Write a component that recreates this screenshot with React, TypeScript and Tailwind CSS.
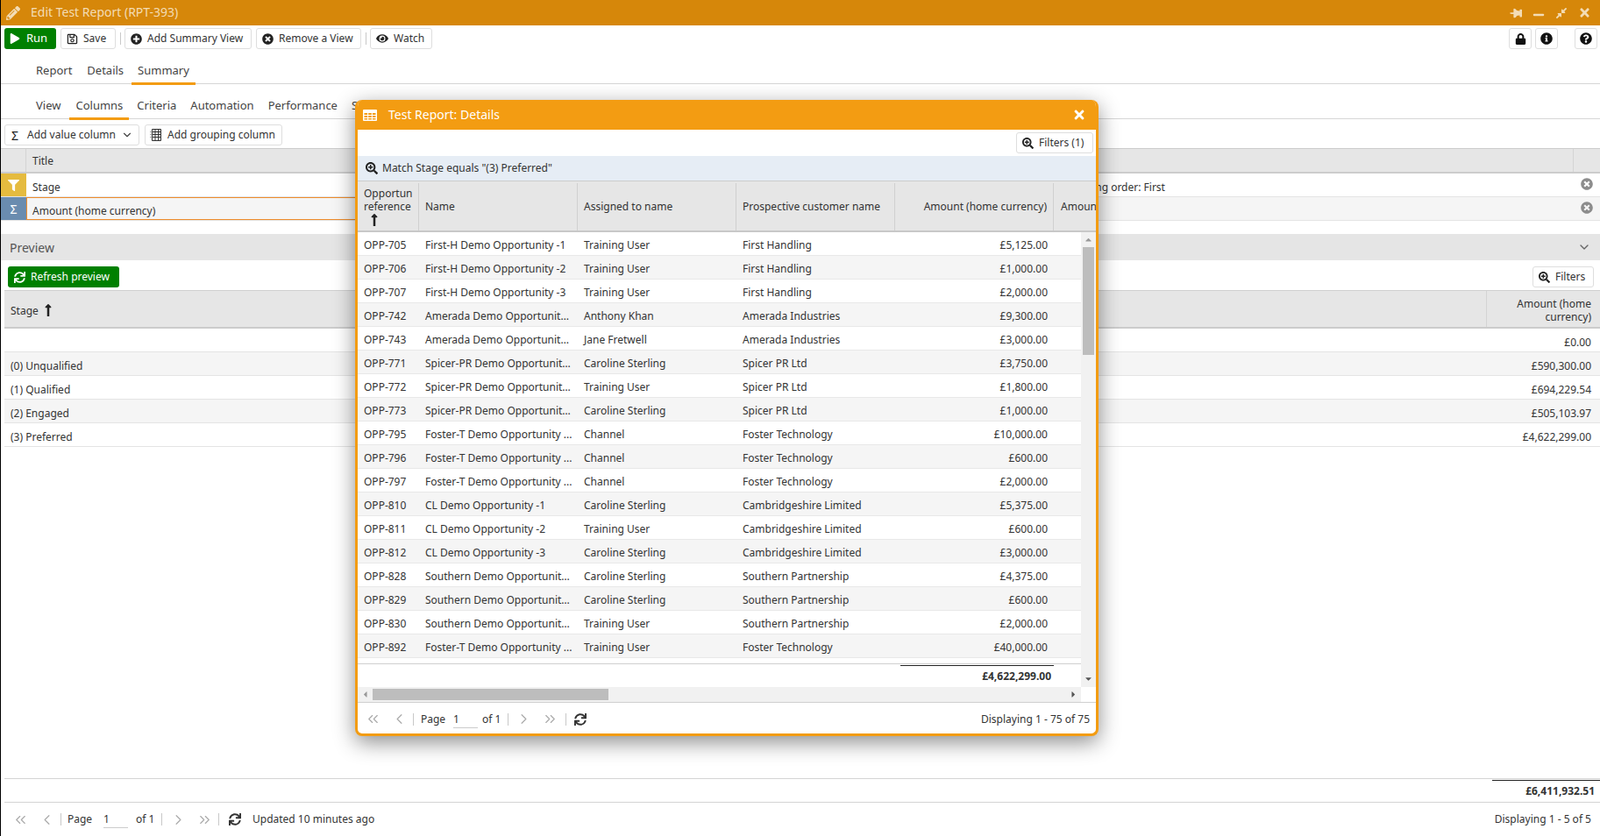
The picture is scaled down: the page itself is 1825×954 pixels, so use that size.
import React from "react";
import {
  FaPlay, FaRegSave, FaPlusCircle, FaTimesCircle, FaEye, FaLock, FaInfoCircle, FaQuestionCircle,
  FaThumbtack, FaMinus, FaCompressAlt, FaTimes, FaFilter, FaSearchPlus, FaSync, FaPencilAlt,
  FaLongArrowAltUp, FaCaretUp, FaCaretDown, FaCaretLeft, FaCaretRight,
} from "react-icons/fa";
import { ChevronDown, ChevronLeft, ChevronRight, ChevronsLeft, ChevronsRight } from "lucide-react";

const rows: [string, string, string, string, string][] = [
  ["OPP-705", "First-H Demo Opportunity -1", "Training User", "First Handling", "£5,125.00"],
  ["OPP-706", "First-H Demo Opportunity -2", "Training User", "First Handling", "£1,000.00"],
  ["OPP-707", "First-H Demo Opportunity -3", "Training User", "First Handling", "£2,000.00"],
  ["OPP-742", "Amerada Demo Opportunity -1", "Anthony Khan", "Amerada Industries", "£9,300.00"],
  ["OPP-743", "Amerada Demo Opportunity -2", "Jane Fretwell", "Amerada Industries", "£3,000.00"],
  ["OPP-771", "Spicer-PR Demo Opportunity -1", "Caroline Sterling", "Spicer PR Ltd", "£3,750.00"],
  ["OPP-772", "Spicer-PR Demo Opportunity -2", "Training User", "Spicer PR Ltd", "£1,800.00"],
  ["OPP-773", "Spicer-PR Demo Opportunity -3", "Caroline Sterling", "Spicer PR Ltd", "£1,000.00"],
  ["OPP-795", "Foster-T Demo Opportunity ...", "Channel", "Foster Technology", "£10,000.00"],
  ["OPP-796", "Foster-T Demo Opportunity ...", "Channel", "Foster Technology", "£600.00"],
  ["OPP-797", "Foster-T Demo Opportunity ...", "Channel", "Foster Technology", "£2,000.00"],
  ["OPP-810", "CL Demo Opportunity -1", "Caroline Sterling", "Cambridgeshire Limited", "£5,375.00"],
  ["OPP-811", "CL Demo Opportunity -2", "Training User", "Cambridgeshire Limited", "£600.00"],
  ["OPP-812", "CL Demo Opportunity -3", "Caroline Sterling", "Cambridgeshire Limited", "£3,000.00"],
  ["OPP-828", "Southern Demo Opportunity -1", "Caroline Sterling", "Southern Partnership", "£4,375.00"],
  ["OPP-829", "Southern Demo Opportunity -2", "Caroline Sterling", "Southern Partnership", "£600.00"],
  ["OPP-830", "Southern Demo Opportunity -3", "Training User", "Southern Partnership", "£2,000.00"],
  ["OPP-892", "Foster-T Demo Opportunity ...", "Training User", "Foster Technology", "£40,000.00"],
];

const preview: [string, string][] = [
  ["", "£0.00"],
  ["(0) Unqualified", "£590,300.00"],
  ["(1) Qualified", "£694,229.54"],
  ["(2) Engaged", "£505,103.97"],
  ["(3) Preferred", "£4,622,299.00"],
];

function Btn({ icon, children, className = "" }: { icon: React.ReactNode; children?: React.ReactNode; className?: string }) {
  return (
    <div className={`flex h-[24px] items-center rounded-[3px] border border-[#dedede] bg-white text-[12px] text-[#333] ${className}`}>
      {icon}
      {children}
    </div>
  );
}

function Sep() {
  return <div className="h-[14px] w-px bg-[#c8c8c8]" />;
}

function TableIcon() {
  return (
    <svg width="16" height="13" viewBox="0 0 16 13" className="shrink-0" fill="currentColor">
      <path
        fillRule="evenodd"
        d="M1 0h14a1 1 0 0 1 1 1v11a1 1 0 0 1-1 1H1a1 1 0 0 1-1-1V1a1 1 0 0 1 1-1zM1.5 4v2h3.6V4zM6.2 4v2h3.6V4zM10.9 4v2h3.6V4zM1.5 7v2h3.6V7zM6.2 7v2h3.6V7zM10.9 7v2h3.6V7zM1.5 10v1.6h3.6V10zM6.2 10v1.6h3.6V10zM10.9 10v1.6h3.6V10z"
      />
    </svg>
  );
}

function GroupIcon() {
  return (
    <svg width="13" height="14" viewBox="0 0 13 14" className="ml-[5px] shrink-0" fill="none" stroke="#333" strokeWidth="1">
      <path d="M2.5 .5h10v13h-10zM2.5 3.5h10M2.5 6.5h10M2.5 9.5h10M6 .5v13M9.5 .5v13" />
      <path d="M0 3.5h2.5M0 6.5h2.5M0 9.5h2.5" stroke="#aaa" />
    </svg>
  );
}

function Pager({ note, compact }: { note?: string; compact?: boolean }) {
  return (
    <div className="flex items-center whitespace-nowrap text-[12px] text-[#333]">
      <div className="flex w-[30px] justify-center"><ChevronsLeft size={19} strokeWidth={1.5} className="text-[#aaa]" /></div>
      <div className="flex w-[30px] justify-center"><ChevronLeft size={19} strokeWidth={1.5} className="text-[#aaa]" /></div>
      <div className="ml-px"><Sep /></div>
      <span className={`w-[27px] ${compact ? "ml-[8px]" : "ml-[7px]"}`}>Page</span>
      <div className={`h-[20px] w-[28px] border-b border-[#ccc] leading-[20px] ${compact ? "ml-[10px]" : "ml-[14px]"}`}>1</div>
      <span className={`w-[20px] ${compact ? "ml-[5px]" : "ml-[9px]"}`}>of 1</span>
      <div className="ml-[9px]"><Sep /></div>
      <div className={`flex w-[30px] justify-center ${compact ? "ml-[2px]" : "ml-[3px]"}`}><ChevronRight size={19} strokeWidth={1.5} className="text-[#aaa]" /></div>
      <div className="flex w-[30px] justify-center"><ChevronsRight size={19} strokeWidth={1.5} className="text-[#aaa]" /></div>
      <div className={compact ? "ml-[3px]" : "ml-px"}><Sep /></div>
      <div className={`flex w-[18px] justify-center ${compact ? "ml-[7px]" : "ml-[9px]"}`}><FaSync size={14} className="text-[#333]" /></div>
      {note && <span className="ml-[11px]">{note}</span>}
    </div>
  );
}

function Tab({ children, active }: { children: React.ReactNode; active?: boolean }) {
  return (
    <div className={`flex h-[41px] shrink-0 items-center whitespace-nowrap border-b-[3px] px-[7px] pt-[12px] text-[13px] text-[#444] first:mr-px ${active ? "border-[#f39c12]" : "border-transparent"}`}>
      {children}
    </div>
  );
}

function Modal() {
  return (
    <div className="absolute left-[404px] top-[114px] flex h-[726px] w-[848px] flex-col overflow-hidden rounded-[8px] border-x-[3px] border-b-[3px] border-[#f39c12] bg-white text-[12px] text-[#333] shadow-[0_7px_24px_rgba(0,0,0,0.45)]">
      <div className="flex h-[34px] shrink-0 items-center bg-[#f39c12] pl-[6px] pr-[11px] text-white">
        <TableIcon />
        <span className="ml-[13px] -translate-y-px text-[14px]">Test Report: Details</span>
        <FaTimes size={16} className="ml-auto" />
      </div>
      <div className="flex h-[30px] shrink-0 items-center justify-end pr-[3px]">
        <Btn className="w-[88px]" icon={<FaSearchPlus size={13} className="ml-[6px] text-[#222]" />}>
          <span className="ml-[6px]">Filters (1)</span>
        </Btn>
      </div>
      <div className="flex h-[28px] shrink-0 items-center bg-[#e6edf5] pl-[9px]">
        <FaSearchPlus size={14} className="text-[#222]" />
        <span className="ml-[5px]">Match Stage equals "(3) Preferred"</span>
      </div>
      <div className="flex h-[59px] shrink-0 overflow-hidden border-y border-b-[2px] border-[#ccc] border-b-[#c8c8c8] bg-[#e6e6e6] pt-[2px]">
        <div className="flex w-[70px] shrink-0 items-center border-r border-[#d0d0d0] pl-[7px]">
          <div className="w-[55px] overflow-hidden leading-[15px]">
            <div className="whitespace-nowrap">Opportunity</div>
            <div>reference</div>
            <FaLongArrowAltUp size={16} className="ml-[4px] text-[#222]" />
          </div>
        </div>
        <div className="flex w-[181px] shrink-0 items-center border-r border-[#d0d0d0] pl-[7px]">Name</div>
        <div className="flex w-[181px] shrink-0 items-center border-r border-[#d0d0d0] pl-[7px]">Assigned to name</div>
        <div className="flex w-[181px] shrink-0 items-center border-r border-[#d0d0d0] pl-[7px]">Prospective customer name</div>
        <div className="flex w-[181px] shrink-0 items-center justify-end border-r border-[#d0d0d0] pr-[7px]">Amount (home currency)</div>
        <div className="flex w-[100px] shrink-0 items-center whitespace-nowrap pl-[8px]">Amount</div>
      </div>
      <div className="flex min-h-0 flex-1">
        <div className="flex min-w-0 flex-1 flex-col">
          <div className="flex-1 overflow-hidden">
            {rows.map((r, i) => (
              <div key={r[0]} className={`flex h-[27px] items-center border-b border-[#e8e8e8] pt-[4px] ${i % 2 ? "bg-[#f5f5f5]" : "bg-white"}`}>
                <div className="w-[70px] shrink-0 pl-[7px]">{r[0]}</div>
                <div className="w-[181px] shrink-0 truncate pl-[7px] pr-[5px]">{r[1]}</div>
                <div className="w-[181px] shrink-0 pl-[7px]">{r[2]}</div>
                <div className="w-[181px] shrink-0 pl-[7px]">{r[3]}</div>
                <div className="w-[181px] shrink-0 pr-[7px] text-right">{r[4]}</div>
              </div>
            ))}
          </div>
          <div className="flex h-[27px] shrink-0 justify-end border-t border-[#d0d0d0] pt-px">
            <div className="mr-[31px] flex h-[24px] w-[175px] items-center justify-end border-t border-[#222] pr-[3px] font-bold">£4,622,299.00</div>
          </div>
        </div>
        <div className="flex w-[17px] shrink-0 flex-col items-center bg-[#f1f1f1]">
          <FaCaretUp size={11} className="mt-[3px] h-[11px] text-[#999]" />
          <div className="mt-[3px] h-[123px] w-[13px] bg-[#bdbdbd]" />
          <div className="flex-1" />
          <FaCaretDown size={11} className="mb-[4px] text-[#555]" />
        </div>
      </div>
      <div className="flex h-[18px] shrink-0 border-b border-[#d0d0d0] bg-white">
        <div className="flex flex-1 items-center bg-[#f1f1f1]">
          <FaCaretLeft size={11} className="ml-[3px] text-[#999]" />
          <div className="ml-[3px] h-[13px] w-[269px] bg-[#bdbdbd]" />
          <FaCaretRight size={11} className="ml-auto mr-[3px] text-[#555]" />
        </div>
        <div className="w-[17px]" />
      </div>
      <div className="flex h-[35px] shrink-0 items-center justify-between pl-[2px] pr-[7px] pt-[2px]">
        <Pager compact />
        <span>Displaying 1 - 75 of 75</span>
      </div>
    </div>
  );
}

export default function App() {
  return (
    <div className="relative flex h-[954px] w-[1825px] flex-col overflow-hidden border-l border-black bg-white font-['Open_Sans',sans-serif] text-[12px] text-[#333]">
      <div className="flex h-[29px] shrink-0 items-center bg-[#d6870a] pl-[6px] pr-[10px] text-[#f3dcb5]">
        <FaPencilAlt size={16} />
        <span className="ml-[12px] -translate-y-px text-[14px]">Edit Test Report (RPT-393)</span>
        <div className="ml-auto flex items-center gap-[12px]">
          <FaThumbtack size={14} className="rotate-90" />
          <FaMinus size={14} className="mt-[5px]" />
          <FaCompressAlt size={14} />
          <FaTimes size={15} />
        </div>
      </div>

      <div className="flex h-[27px] shrink-0 items-start pl-[4px] pr-[3px] pt-[3px]">
        <div className="flex h-[24px] w-[59px] items-center rounded-[3px] bg-[#008000] text-[13px] text-white">
          <FaPlay size={12} className="ml-[6px]" />
          <span className="ml-[7px]">Run</span>
        </div>
        <Btn className="ml-[5px] w-[63px]" icon={<FaRegSave size={13} className="ml-[6px] text-[#222]" />}>
          <span className="ml-[6px]">Save</span>
        </Btn>
        <div className="ml-[5px] mr-[4px] mt-[5px]"><Sep /></div>
        <Btn className="w-[145px]" icon={<FaPlusCircle size={13} className="ml-[6px] text-[#222]" />}>
          <span className="ml-[6px]">Add Summary View</span>
        </Btn>
        <Btn className="ml-[5px] w-[120px]" icon={<FaTimesCircle size={13} className="ml-[6px] text-[#222]" />}>
          <span className="ml-[6px]">Remove a View</span>
        </Btn>
        <div className="ml-[5px] mr-[4px] mt-[5px]"><Sep /></div>
        <Btn className="w-[71px]" icon={<FaEye size={14} className="ml-[6px] text-[#222]" />}>
          <span className="ml-[6px]">Watch</span>
        </Btn>
        <div className="ml-auto flex">
          <Btn className="w-[26px] justify-center" icon={<FaLock size={13} className="text-[#111]" />} />
          <Btn className="ml-[4px] w-[26px] justify-center" icon={<FaInfoCircle size={14} className="text-[#111]" />} />
          <Btn className="ml-[19px] w-[26px] justify-center" icon={<FaQuestionCircle size={14} className="text-[#111]" />} />
        </div>
      </div>

      <div className="flex h-[40px] shrink-0 gap-[2px] border-b border-[#d6d6d6] pl-[33px]">
        <Tab>Report</Tab>
        <Tab>Details</Tab>
        <Tab active>Summary</Tab>
      </div>
      <div className="flex h-[40px] shrink-0 gap-[2px] border-b border-[#d6d6d6] pl-[33px]">
        <Tab>View</Tab>
        <Tab active>Columns</Tab>
        <Tab>Criteria</Tab>
        <Tab>Automation</Tab>
        <Tab>Performance</Tab>
        <Tab>Security</Tab>
      </div>

      <div className="flex h-[33px] shrink-0 items-start pl-[4px] pt-[6px]">
        <Btn className="w-[154px]" icon={<span className="ml-[7px] text-[14px] text-[#222]">Σ</span>}>
          <span className="ml-[10px]">Add value column</span>
          <ChevronDown size={14} className="ml-[6px] text-[#444]" />
        </Btn>
        <Btn className="ml-[6px] w-[157px]" icon={<GroupIcon />}>
          <span className="ml-[7px]">Add grouping column</span>
        </Btn>
      </div>

      <div className="flex h-[29px] shrink-0 border-y border-b-[2px] border-[#ccc] bg-[#e6e6e6]">
        <div className="w-[29px] border-r border-[#d4d4d4]" />
        <div className="flex flex-1 items-center pl-[7px] pt-[2px]">Title</div>
        <div className="w-[31px] border-l border-[#d4d4d4]" />
      </div>
      <div className="flex h-[27px] shrink-0 items-stretch border-b border-[#e4e4e4]">
        <div className="flex w-[29px] items-center justify-center bg-[#e5bb3f] text-white"><FaFilter size={13} /></div>
        <div className="flex w-[770px] items-center pl-[7px] pt-[5px]">Stage</div>
        <div className="w-[416px]" />
        <div className="flex flex-1 items-center pl-[7px] pt-[5px]">Sorting order: First</div>
        <div className="flex w-[31px] items-center justify-center"><FaTimesCircle size={14} className="-translate-y-px text-[#8c8c8c]" /></div>
      </div>
      <div className="flex h-[27px] shrink-0 items-stretch border-b border-[#e4e4e4] bg-[#f5f5f5]">
        <div className="flex w-[29px] items-center justify-center bg-[#6a8caf] text-[14px] text-white">Σ</div>
        <div className="flex w-[770px] items-center border border-[#ee8c2c] pl-[6px] pt-[5px]">Amount (home currency)</div>
        <div className="flex-1" />
        <div className="flex w-[31px] items-center justify-center"><FaTimesCircle size={14} className="-translate-y-px text-[#8c8c8c]" /></div>
      </div>

      <div className="mt-[15px] flex h-[30px] shrink-0 items-center bg-[#e5e5e5] pl-[10px] pr-[10px] text-[14px] text-[#555]">
        Preview
        <ChevronDown size={16} className="ml-auto text-[#666]" />
      </div>

      <div className="flex h-[34px] shrink-0 items-start justify-between pl-[8px] pr-[7px] pt-[7px]">
        <div className="flex h-[24px] w-[127px] items-center rounded-[3px] bg-[#008000] text-[12px] text-white">
          <FaSync size={13} className="ml-[7px]" />
          <span className="ml-[6px]">Refresh preview</span>
        </div>
        <Btn className="w-[70px]" icon={<FaSearchPlus size={13} className="ml-[6px] text-[#222]" />}>
          <span className="ml-[6px]">Filters</span>
        </Btn>
      </div>

      <div className="ml-[4px] flex h-[44px] shrink-0 border-y border-b-[2px] border-[#ccc] border-t-[#d0d0d0] bg-[#e6e6e6]">
        <div className="flex flex-1 items-center pl-[7px] pt-[4px]">
          Stage
          <FaLongArrowAltUp size={16} className="ml-[3px] -translate-y-px text-[#222]" />
        </div>
        <div className="flex w-[130px] items-center justify-end border-l border-[#d4d4d4] pr-[10px] pt-[2px] text-right leading-[15px]">Amount (home<br />currency)</div>
      </div>
      {preview.map((p, i) => (
        <div key={i} className={`ml-[4px] flex h-[27px] shrink-0 items-center justify-between border-b border-[#e4e4e4] pl-[7px] pr-[10px] pt-[5px] ${i % 2 ? "bg-[#f5f5f5]" : "bg-white"}`}>
          <span>{p[0]}</span>
          <span>{p[1]}</span>
        </div>
      ))}

      <div className="flex-1" />

      <div className="ml-[4px] flex h-[28px] shrink-0 justify-end border-y border-[#d4d4d4] pt-px">
        <div className="flex h-[25px] w-[123px] items-center justify-end border-t border-[#222] pr-[6px] font-bold">£6,411,932.51</div>
      </div>
      <div className="ml-[7px] flex h-[38px] shrink-0 items-center justify-between pr-[10px]">
        <Pager note="Updated 10 minutes ago" />
        <span>Displaying 1 - 5 of 5</span>
      </div>

      <Modal />
    </div>
  );
}
